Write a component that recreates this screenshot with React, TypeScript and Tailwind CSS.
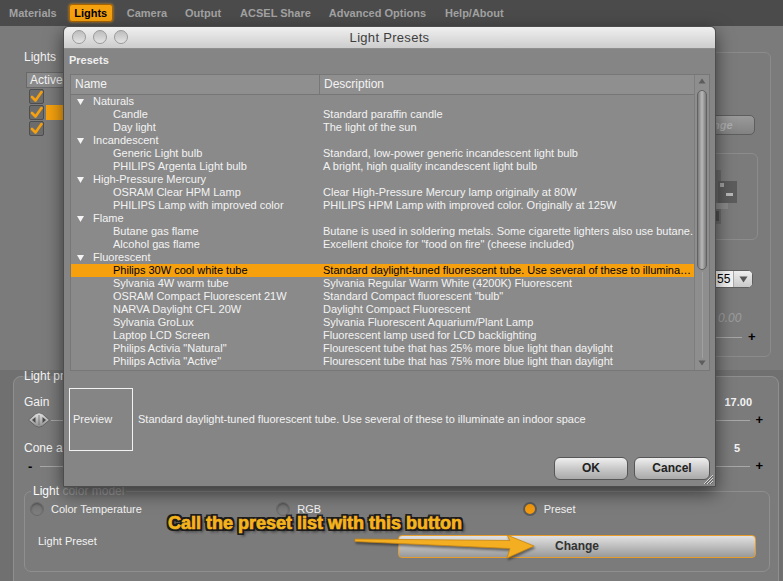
type Row = { name: string; desc?: string; group?: boolean; selected?: boolean }

const rows: Row[] = [
  { name: 'Naturals', group: true },
  { name: 'Candle', desc: 'Standard paraffin candle' },
  { name: 'Day light', desc: 'The light of the sun' },
  { name: 'Incandescent', group: true },
  { name: 'Generic Light bulb', desc: 'Standard, low-power generic incandescent light bulb' },
  { name: 'PHILIPS Argenta Light bulb', desc: 'A bright, high quality incandescent light bulb' },
  { name: 'High-Pressure Mercury', group: true },
  { name: 'OSRAM Clear HPM Lamp', desc: 'Clear High-Pressure Mercury lamp originally at 80W' },
  { name: 'PHILIPS Lamp with improved color', desc: 'PHILIPS HPM Lamp with improved color. Originally at 125W' },
  { name: 'Flame', group: true },
  { name: 'Butane gas flame', desc: 'Butane is used in soldering metals. Some cigarette lighters also use butane.' },
  { name: 'Alcohol gas flame', desc: 'Excellent choice for "food on fire" (cheese included)' },
  { name: 'Fluorescent', group: true },
  {
    name: 'Philips 30W cool white tube',
    desc: 'Standard daylight-tuned fluorescent tube. Use several of these to illuminate an indoor space',
    selected: true,
  },
  { name: 'Sylvania 4W warm tube', desc: 'Sylvania Regular Warm White (4200K) Fluorescent' },
  { name: 'OSRAM Compact Fluorescent 21W', desc: 'Standard Compact fluorescent "bulb"' },
  { name: 'NARVA Daylight CFL 20W', desc: 'Daylight Compact Fluorescent' },
  { name: 'Sylvania GroLux', desc: 'Sylvania Fluorescent Aquarium/Plant Lamp' },
  { name: 'Laptop LCD Screen', desc: 'Fluorescent lamp used for LCD backlighting' },
  { name: 'Philips Activia "Natural"', desc: 'Flourescent tube that has 25% more blue light than daylight' },
  { name: 'Philips Activia "Active"', desc: 'Flourescent tube that has 75% more blue light than daylight' },
  { name: 'LED', group: true },
]

function Check() {
  return (
    <div className="flex h-[15px] w-[15px] items-center justify-center rounded-[2px] border border-[#4e4e4e] bg-[#6c6c6c]">
      <svg width="13" height="13" viewBox="0 0 13 13">
        <polyline points="2,7 5.5,10.5 11.5,2" fill="none" stroke="#f5a00f" strokeWidth="2.6" strokeLinecap="round" strokeLinejoin="round" />
      </svg>
    </div>
  )
}

function Knob() {
  return (
    <svg width="24" height="16" viewBox="0 0 24 16">
      <defs>
        <linearGradient id="kg" x1="0" y1="0" x2="0" y2="1">
          <stop offset="0" stopColor="#e6e6e6" />
          <stop offset="1" stopColor="#8a8a8a" />
        </linearGradient>
      </defs>
      <path d="M1.5 8 L8.5 2 Q12 -0.5 15.5 2 L22.5 8 L15.5 14 Q12 16.5 8.5 14 Z" fill="url(#kg)" stroke="#5a5a5a" strokeWidth="0.8" />
      <path d="M5 8 L8.5 5 L8.5 11 Z" fill="#4a4a4a" />
      <path d="M19 8 L15.5 5 L15.5 11 Z" fill="#4a4a4a" />
      <line x1="12" y1="3" x2="12" y2="13" stroke="#6a6a6a" strokeWidth="0.8" />
    </svg>
  )
}

function Plus() {
  return <span className="w-[7px] text-center text-[13px] font-bold leading-[13px] text-black">+</span>
}

function TabBar() {
  return (
    <div className="flex h-[26px] items-center bg-[#4b4b4b] pl-[9px] text-[11px] font-bold text-[#a2a2a2]">
      <span>Materials</span>
      <span className="ml-[12px] flex h-[18px] w-[44px] items-center justify-center rounded-[3px] border border-[#a86400] bg-[#f6a20f] text-black shadow-[0_0_3px_rgba(255,170,30,0.7)]">
        Lights
      </span>
      <span className="ml-[14px]">Camera</span>
      <span className="ml-[18px]">Output</span>
      <span className="ml-[19px]">ACSEL Share</span>
      <span className="ml-[18px]">Advanced Options</span>
      <span className="ml-[19px]">Help/About</span>
    </div>
  )
}

function UpperArea() {
  return (
    <div className="flex h-[344px]">
      <div className="pl-[24px] pt-[25px]">
        <div className="text-[12px]">Lights</div>
        <div className="ml-[2px] mt-[8px] w-[200px]">
          <div className="flex h-[16px] items-center border border-[#686868] bg-[#8b8b8b] text-[12px]">
            <span className="w-[37px] border-r border-[#6a6a6a] pl-[3px]">Active</span>
          </div>
          {[0, 1, 2].map((i) => (
            <div key={i} className="flex h-[16px] items-center">
              <div className="ml-[3px]">
                <Check />
              </div>
              <div className={i === 1 ? 'ml-[2px] h-[15px] flex-1 bg-[#f6a20f]' : 'flex-1'} />
            </div>
          ))}
        </div>
      </div>
      <div className="ml-auto mr-[12px] mt-[26px] flex h-[305px] w-[131px] flex-col rounded-[6px] border border-[#8b8b8b]">
        <div className="ml-[29px] mt-[62px] flex h-[20px] w-[85px] items-center justify-center rounded-[5px] border border-[#5e5e5e] bg-gradient-to-b from-[#9a9a9a] to-[#828282] text-[11px] font-bold italic text-[#adadad]">
          Change
        </div>
        <div className="ml-[40px] mt-[18px] flex h-[87px] w-[77px] items-center rounded-[6px] border border-[#8c8c8c]">
          <svg width="26" height="60" viewBox="0 0 26 60" className="ml-[30px]">
            <rect x="0" y="3" width="9" height="54" fill="#6a6a6a" />
            <rect x="6" y="14" width="19" height="22" fill="#5c5c5c" />
            <rect x="8" y="16" width="4" height="4" fill="#a0a0a0" />
            <rect x="14" y="26" width="7" height="3" fill="#b8b8b8" />
            <rect x="3" y="36" width="13" height="6" fill="#8a8a8a" />
            <rect x="2" y="44" width="5" height="10" fill="#4f4f4f" />
          </svg>
        </div>
        <div className="ml-[40px] mt-[30px] flex h-[18px] w-[72px] items-center rounded-[5px] border border-[#5f5f5f] bg-[#f4f4f4] text-[12px] text-black">
          <span className="flex-1 pl-[35px]">55</span>
          <span className="flex h-[16px] w-[19px] items-center justify-center rounded-r-[4px] border-l border-[#aaa] bg-gradient-to-b from-[#eee] to-[#c9c9c9]">
            <svg width="9" height="7" viewBox="0 0 9 7">
              <path d="M0.5 0.5 L8.5 0.5 L4.5 6.5 Z" fill="#555" />
            </svg>
          </span>
        </div>
        <div className="ml-[77px] mt-[24px] text-[12px] italic text-[#9d9d9d]">0.00</div>
        <div className="ml-[59px] mt-[5px] flex items-center">
          <div className="h-px w-[42px] bg-[#a5a5a5]" />
          <span className="ml-[6px]">
            <Plus />
          </span>
        </div>
      </div>
    </div>
  )
}

function Radio({ on }: { on?: boolean }) {
  return (
    <span
      className={
        on
          ? 'flex h-[14px] w-[14px] items-center justify-center rounded-full border-2 border-[#5b5b5b] bg-[#f39a0e]'
          : 'h-[14px] w-[14px] rounded-full border border-[#6a6a6a] bg-gradient-to-b from-[#707070] to-[#808080] shadow-[inset_0_1px_2px_rgba(0,0,0,0.35)]'
      }
    />
  )
}

function LightProperties() {
  return (
    <div className="flex h-[211px] bg-[#707070] pl-[13px]">
      <fieldset className="h-[230px] w-[766px] min-w-0 rounded-[8px] border border-[#8f8f8f] bg-[#7b7b7b] pl-[10px] pr-[8px]">
        <legend className="ml-[-1px] px-[1px] text-[12px] leading-[12px]">Light properties</legend>
        <div className="mt-[14px] flex h-[13px] items-center justify-between pr-[18px]">
          <span className="text-[12px]">Gain</span>
          <span className="font-bold">17.00</span>
        </div>
        <div className="mt-[3px] flex h-[16px] items-center pr-[7px]">
          <span className="ml-[3px]">
            <Knob />
          </span>
          <div className="h-px flex-1 bg-[#a8a8a8]" />
          <span className="ml-[5px]">
            <Plus />
          </span>
        </div>
        <div className="mt-[14px] flex h-[13px] items-center justify-between pr-[30px]">
          <span className="text-[12px]">Cone angle</span>
          <span className="font-bold">5</span>
        </div>
        <div className="mt-[4px] flex h-[14px] items-center pr-[7px]">
          <span className="ml-[4px] text-[13px] font-bold text-black">-</span>
          <div className="ml-[8px] h-px flex-1 bg-[#a8a8a8]" />
          <span className="ml-[5px]">
            <Plus />
          </span>
        </div>
        <fieldset className="mt-[12px] h-[87px] w-[746px] min-w-0 rounded-[7px] border border-[#8f8f8f] pl-[5px]">
          <legend className="ml-[1px] px-[2px] text-[12px] leading-[12px]">
            <span className="text-white">Light</span> <span className="text-[#a2a2a2]">color model</span>
          </legend>
          <div className="mt-[5px] grid h-[14px] grid-cols-3">
            <div className="flex items-center gap-[7px]">
              <Radio />
              <span>Color Temperature</span>
            </div>
            <div className="flex items-center gap-[7px]">
              <Radio />
              <span>RGB</span>
            </div>
            <div className="flex items-center gap-[7px]">
              <Radio on />
              <span>Preset</span>
            </div>
          </div>
          <div className="mt-[19px] flex items-start">
            <span className="ml-[8px] w-[360px] text-[11px]">Light Preset</span>
            <button className="flex h-[23px] w-[358px] items-center justify-center rounded-[4px] border border-[#e59c2a] bg-gradient-to-b from-[#e2e2e2] via-[#bdbdbd] to-[#999999] text-[12px] font-bold text-[#333]">
              Change
            </button>
          </div>
        </fieldset>
      </fieldset>
    </div>
  )
}

function Scrollbar() {
  return (
    <div className="flex w-[15px] flex-col items-center border-l border-[#7e7e7e] bg-[#8e8e8e]">
      <svg width="8" height="6" viewBox="0 0 8 6" className="mt-[3px]">
        <path d="M4 0.5 L7.5 5.5 L0.5 5.5 Z" fill="#5d5d5d" />
      </svg>
      <div className="mt-[6px] h-[180px] w-[10px] rounded-full border border-[#626262] bg-gradient-to-r from-[#7c7c7c] via-[#b9b9b9] to-[#7a7a7a]" />
      <div className="my-[2px] w-px flex-1 bg-[#a0a0a0]" />
      <svg width="8" height="6" viewBox="0 0 8 6" className="mb-[4px]">
        <path d="M0.5 0.5 L7.5 0.5 L4 5.5 Z" fill="#5d5d5d" />
      </svg>
    </div>
  )
}

function PresetList() {
  return (
    <div className="ml-[6px] flex h-[297px] w-[640px] overflow-hidden border border-[#777] bg-[#8a8a8a]">
      <div className="flex min-w-0 flex-1 flex-col">
        <div className="flex h-[20px] shrink-0 items-center border-b border-[#767676] bg-[#8f8f8f] text-[12px]">
          <span className="flex h-full w-[249px] items-center border-r border-[#777] pl-[4px]">Name</span>
          <span className="pl-[4px]">Description</span>
        </div>
        <div className="flex-1 overflow-hidden">
          {rows.map((r) => (
            <div
              key={r.name}
              className={
                r.selected
                  ? 'flex h-[13px] items-center bg-[#f6a00e] text-black'
                  : 'flex h-[13px] items-center'
              }
            >
              <div className="flex w-[249px] shrink-0 items-center">
                {r.group ? (
                  <>
                    <svg width="7" height="6" viewBox="0 0 7 6" className="ml-[6px]">
                      <path d="M0 0 L7 0 L3.5 6 Z" fill="#f4f4f4" />
                    </svg>
                    <span className="ml-[9px]">{r.name}</span>
                  </>
                ) : (
                  <span className="ml-[42px]">{r.name}</span>
                )}
              </div>
              <span className="min-w-0 flex-1 truncate pl-[3px]">{r.desc ?? ''}</span>
            </div>
          ))}
        </div>
      </div>
      <Scrollbar />
    </div>
  )
}

function PresetsDialog() {
  return (
    <div className="absolute left-[63px] top-[26px] flex h-[461px] w-[653px] flex-col rounded-t-[5px] border border-[#4d4d4d] bg-[#858585] shadow-[0_6px_18px_rgba(0,0,0,0.55)]">
      <div className="relative flex h-[22px] shrink-0 items-center justify-center rounded-t-[5px] border-b border-[#8e8e8e] bg-gradient-to-b from-[#f0f0f0] to-[#cdcdcd]">
        <div className="absolute left-[8px] top-[3px] flex gap-[7px]">
          {[0, 1, 2].map((i) => (
            <span
              key={i}
              className="h-[14px] w-[14px] rounded-full border border-[#9a9a9a] bg-gradient-to-b from-[#bdbdbd] to-[#e4e4e4]"
            />
          ))}
        </div>
        <span className="text-[13px] tracking-[0.3px] text-[#3e3e3e]">Light Presets</span>
      </div>
      <div className="pl-[5px] pt-[5px] text-[11px] font-bold text-[#f0f0f0]">Presets</div>
      <div className="mt-[7px]">
        <PresetList />
      </div>
      <div className="mt-[17px] flex items-center">
        <div className="ml-[5px] flex h-[63px] w-[64px] items-center border border-[#f2f2f2] pl-[3px] text-[11px]">
          Preview
        </div>
        <span className="ml-[5px] text-[11px]">
          Standard daylight-tuned fluorescent tube. Use several of these to illuminate an indoor space
        </span>
      </div>
      <div className="mt-[6px] flex justify-end gap-[6px] pr-[5px]">
        <button className="h-[23px] w-[74px] rounded-[6px] border border-[#565656] bg-gradient-to-b from-[#efefef] via-[#c9c9c9] to-[#a9a9a9] text-[12px] font-bold text-[#222]">
          OK
        </button>
        <button className="h-[23px] w-[76px] rounded-[6px] border border-[#565656] bg-gradient-to-b from-[#efefef] via-[#c9c9c9] to-[#a9a9a9] text-[12px] font-bold text-[#222]">
          Cancel
        </button>
      </div>
      <svg width="12" height="12" viewBox="0 0 12 12" className="absolute bottom-[1px] right-[1px]">
        <line x1="11" y1="2" x2="2" y2="11" stroke="#d8d8d8" strokeWidth="1" />
        <line x1="11" y1="5" x2="5" y2="11" stroke="#d8d8d8" strokeWidth="1" />
        <line x1="11" y1="8" x2="8" y2="11" stroke="#d8d8d8" strokeWidth="1" />
        <line x1="11" y1="3" x2="3" y2="11" stroke="#555" strokeWidth="0.7" />
        <line x1="11" y1="6" x2="6" y2="11" stroke="#555" strokeWidth="0.7" />
        <line x1="11" y1="9" x2="9" y2="11" stroke="#555" strokeWidth="0.7" />
      </svg>
    </div>
  )
}

function Annotation() {
  return (
    <>
      <div className="absolute left-[168px] top-[512px] whitespace-nowrap text-[18px] font-bold leading-[22px] text-[#f6b41c] [-webkit-text-stroke:0.7px_#f6b41c] [text-shadow:-2px_-2px_0_#1c1c1c,2px_-2px_0_#1c1c1c,-2px_2px_0_#1c1c1c,2px_2px_0_#1c1c1c,0_2px_0_#1c1c1c,2px_0_0_#1c1c1c,0_-2px_0_#1c1c1c,-2px_0_0_#1c1c1c,3px_3px_3px_rgba(0,0,0,0.6)]">
        Call the preset list with this button
      </div>
      <svg width="200" height="30" viewBox="0 0 200 30" className="absolute left-[350px] top-[532px] drop-shadow-[1px_2px_1px_rgba(0,0,0,0.45)]">
        <path
          d="M5 7 L160 8.5 L157 3 L184 14 L157 26 L160 16.5 L5 9.5 Z"
          fill="#f4ae22"
          stroke="#c9860f"
          strokeWidth="0.8"
          strokeLinejoin="round"
        />
      </svg>
    </>
  )
}

export default function App() {
  return (
    <div className="relative h-[581px] w-[783px] overflow-hidden bg-[#7b7b7b] font-['Liberation_Sans',Arial,sans-serif] text-[11px] leading-[13px] text-[#f3f3f3]">
      <TabBar />
      <UpperArea />
      <LightProperties />
      <PresetsDialog />
      <Annotation />
    </div>
  )
}
